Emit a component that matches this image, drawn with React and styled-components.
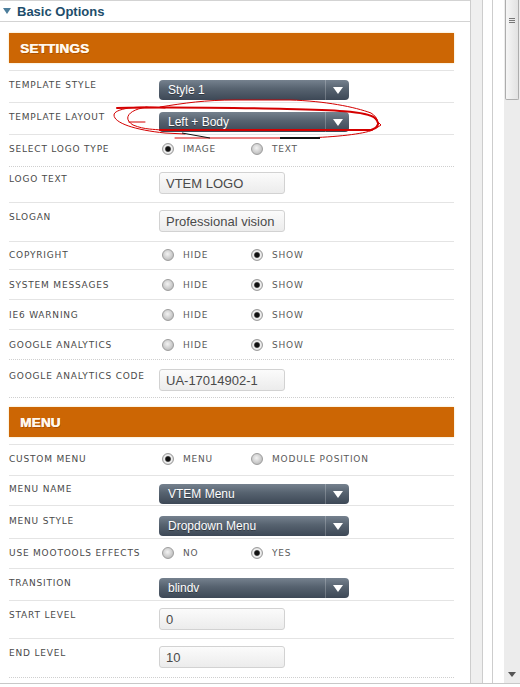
import React from 'react'
import styled, { createGlobalStyle } from 'styled-components'

const GlobalStyle = createGlobalStyle`
  html, body { margin: 0; padding: 0; background: #fff; }
  body { font-family: "Liberation Sans", Arial, sans-serif; }
`

const settings = [
    { label: 'TEMPLATE STYLE', type: 'select', value: 'Style 1', h: 32, pt: 8 },
    { label: 'TEMPLATE LAYOUT', type: 'select', value: 'Left + Body', h: 32, pt: 8 },
    { label: 'SELECT LOGO TYPE', type: 'radio', options: ['IMAGE', 'TEXT'], sel: 0, h: 32, pt: 8, dotted: true },
    { label: 'LOGO TEXT', type: 'input', value: 'VTEM LOGO', h: 36, pt: 6 },
    { label: 'SLOGAN', type: 'input', value: 'Professional vision', h: 39, pt: 8 },
    { label: 'COPYRIGHT', type: 'radio', options: ['HIDE', 'SHOW'], sel: 1, h: 28, pt: 7 },
    { label: 'SYSTEM MESSAGES', type: 'radio', options: ['HIDE', 'SHOW'], sel: 1, h: 30, pt: 9 },
    { label: 'IE6 WARNING', type: 'radio', options: ['HIDE', 'SHOW'], sel: 1, h: 30, pt: 9 },
    { label: 'GOOGLE ANALYTICS', type: 'radio', options: ['HIDE', 'SHOW'], sel: 1, h: 30, pt: 9, dotted: true },
    { label: 'GOOGLE ANALYTICS CODE', type: 'input', value: 'UA-17014902-1', h: 38, pt: 10, dotted: true },
]

const menu = [
    { label: 'CUSTOM MENU', type: 'radio', options: ['MENU', 'MODULE POSITION'], sel: 0, h: 31, pt: 8 },
    { label: 'MENU NAME', type: 'select', value: 'VTEM Menu', h: 30, pt: 7 },
    { label: 'MENU STYLE', type: 'select', value: 'Dropdown Menu', h: 33, pt: 9 },
    { label: 'USE MOOTOOLS EFFECTS', type: 'radio', options: ['NO', 'YES'], sel: 1, h: 30, pt: 8 },
    { label: 'TRANSITION', type: 'select', value: 'blindv', h: 32, pt: 8 },
    { label: 'START LEVEL', type: 'input', value: '0', h: 38, pt: 8 },
    { label: 'END LEVEL', type: 'input', value: '10', h: 39, pt: 8, dotted: true },
]

function Control({ row }) {
    if (row.type === 'select') {
        return (
            <Select>
                <SelectText>{row.value}</SelectText>
                <SelectArrow>
                    <svg width="10" height="7" viewBox="0 0 10 7"><path d="M0 0 H10 L5 7 Z" fill="#fff" /></svg>
                </SelectArrow>
            </Select>
        )
    }
    if (row.type === 'input') {
        return <Input>{row.value}</Input>
    }
    return (
        <Radios>
            {row.options.map((o, i) => (
                <Option key={o}>
                    <Radio checked={i === row.sel} />
                    {o}
                </Option>
            ))}
        </Radios>
    )
}

function Section({ title, rows, top }) {
    return (
        <SectionWrap top={top}>
            <SectionHeader>{title}</SectionHeader>
            <List>
                {rows.map(r => (
                    <Row key={r.label} h={r.h} pt={r.pt} dotted={r.dotted}>
                        <Label>{r.label}</Label>
                        <Control row={r} />
                    </Row>
                ))}
            </List>
        </SectionWrap>
    )
}

export default function App() {
    return (
        <Page>
            <GlobalStyle />
            <Main>
                <Panel>
                    <Header>
                        <svg width="8" height="6" viewBox="0 0 8 6"><path d="M0 0 H8 L4 6 Z" fill="#4c7d9b" /></svg>
                        Basic Options
                    </Header>
                    <Body>
                        <Section title="SETTINGS" rows={settings} top={11} />
                        <Section title="MENU" rows={menu} top={9} />
                    </Body>
                    <Scribble width="285" height="50" viewBox="0 0 285 50">
                        <g fill="none" stroke="#d40000" strokeLinecap="round">
                            <path d="M12 13 C60 12 150 13 182 14 C225 15 262 16 270 23 C275 28 274 32 266 35" strokeWidth="2" />
                            <path d="M55 35 L266 35" strokeWidth="2" />
                            <path d="M60 13 C30 10 9 14 9 20 C9 28 30 35 60 38 L80 39" strokeWidth="1" />
                            <path d="M42 12 C22 15 18 24 28 30 C40 35 50 34 55 35" strokeWidth="1" />
                            <path d="M55 12 C80 8 100 5 130 5 L185 5 C220 6 250 12 266 18 C274 23 275 30 268 35 C258 39 232 42 200 43 L70 43" strokeWidth="1" />
                            <path d="M268 22 L276 30 L270 34" strokeWidth="1" />
                            <path d="M24 27 L40 27" strokeWidth="1" />
                        </g>
                        <path d="M77 38 L105 43" stroke="#111" strokeWidth="1" fill="none" />
                        <path d="M175 43 L215 43" stroke="#111" strokeWidth="2" fill="none" />
                    </Scribble>
                </Panel>
                <Gutter grey />
                <Gutter w={9} />
                <Gutter w={11} last />
                <Scrollbar>
                    <Thumb>
                        <Grip />
                        <Grip />
                        <Grip />
                    </Thumb>
                    <DownArrow>
                        <svg width="8" height="5" viewBox="0 0 8 5"><path d="M0 0 H8 L4 5 Z" fill="#555" /></svg>
                    </DownArrow>
                </Scrollbar>
            </Main>
        </Page>
    )
}

const Page = styled.div`
    width: 520px;
    height: 687px;
    overflow: hidden;
    background: #fff;
`

const Main = styled.div`
    display: flex;
    height: 683px;
    border-bottom: 1px solid #c8c8c8;
`

const Panel = styled.div`
    position: relative;
    width: 470px;
    flex: none;
    border-right: 1px solid #cdcdcd;
`

const Header = styled.div`
    height: 22px;
    box-sizing: border-box;
    border-top: 1px solid #d3d3d3;
    border-bottom: 1px solid #d3d3d3;
    display: flex;
    align-items: center;
    gap: 6px;
    padding-left: 3px;
    font: bold 13px "Liberation Sans", Arial, sans-serif;
    color: #1d4d6b;
`

const Body = styled.div`
    padding: 0 16px 0 9px;
`

const SectionWrap = styled.div`
    margin-top: ${p => p.top}px;
`

const SectionHeader = styled.div`
    height: 30px;
    background: #cc6604;
    box-shadow: 0 0 2px #f6dca8;
    display: flex;
    align-items: center;
    padding-left: 11px;
    color: #fff8ee;
    font: bold 13.5px "Liberation Sans", Arial, sans-serif;
    letter-spacing: 0.2px;
    text-shadow: 0.5px 0 0 #fff8ee, 1px 1px 0 rgba(120, 50, 0, 0.45);
    margin-bottom: 7px;
`

const List = styled.div`
    border-top: 1px solid #e4e4e4;
`

const Row = styled.div`
    display: grid;
    grid-template-columns: 150px 1fr;
    align-items: start;
    box-sizing: border-box;
    height: ${p => p.h}px;
    padding-top: ${p => p.pt}px;
    border-bottom: 1px ${p => (p.dotted ? 'dotted #cfcfcf' : 'solid #e4e4e4')};
`

const Label = styled.div`
    font: 9px "DejaVu Sans", Verdana, sans-serif;
    line-height: 12px;
    letter-spacing: 0.8px;
    color: #4a4a4a;
    white-space: nowrap;
`

const Select = styled.div`
    width: 190px;
    height: 20px;
    margin-top: 1px;
    border-radius: 4px;
    background: linear-gradient(#75818e, #56626f 45%, #3d4856);
    display: flex;
    align-items: center;
    color: #fff;
    font: 12px "Liberation Sans", Arial, sans-serif;
    text-shadow: 0 1px 0 rgba(0, 0, 0, 0.35);
`

const SelectText = styled.span`
    flex: 1;
    padding-left: 9px;
`

const SelectArrow = styled.span`
    width: 23px;
    height: 100%;
    border-left: 1px solid rgba(255, 255, 255, 0.22);
    display: flex;
    align-items: center;
    justify-content: center;
`

const Input = styled.div`
    width: 126px;
    height: 22px;
    margin-top: -1px;
    box-sizing: border-box;
    border: 1px solid #d2d2d2;
    border-radius: 3px;
    background: linear-gradient(#fbfbfb, #ececec);
    padding-left: 6px;
    display: flex;
    align-items: center;
    font: 13px "Liberation Sans", Arial, sans-serif;
    color: #4a4a4a;
`

const Radios = styled.div`
    display: flex;
    padding-left: 3px;
`

const Option = styled.div`
    width: 89px;
    display: flex;
    align-items: center;
    gap: 9px;
    white-space: nowrap;
    font: 9px "DejaVu Sans", Verdana, sans-serif;
    line-height: 12px;
    letter-spacing: 0.8px;
    color: #5a5a5a;
`

const Radio = styled.span`
    width: 12px;
    height: 12px;
    flex: none;
    box-sizing: border-box;
    border-radius: 50%;
    border: 1px solid #9d9d9d;
    background: ${p =>
        p.checked
            ? 'radial-gradient(circle, #111 0 2px, #555 2.6px, #e9e9e9 3.4px, #f2f2f2 4px, #c4c4c4 5.5px)'
            : 'radial-gradient(circle at 45% 40%, #f3f3f3, #c9c9c9 60%, #a8a8a8)'};
`

const Scribble = styled.svg`
    position: absolute;
    left: 105px;
    top: 95px;
    pointer-events: none;
`

const Gutter = styled.div`
    flex: none;
    width: ${p => p.w || 11}px;
    background: ${p => (p.grey ? '#efefef' : '#fff')};
    border-right: ${p => (p.last ? 'none' : '1px solid #cdcdcd')};
`

const Scrollbar = styled.div`
    position: relative;
    width: 16px;
    flex: none;
    background: #ececec;
`

const Thumb = styled.div`
    width: 14px;
    height: 100px;
    margin-left: 1px;
    box-sizing: border-box;
    border: 1px solid #adadad;
    border-top: none;
    border-radius: 0 0 2px 2px;
    background: linear-gradient(to right, #f6f6f6, #e2e2e2);
    display: flex;
    flex-direction: column;
    align-items: center;
    gap: 1px;
    padding-top: 18px;
`

const Grip = styled.span`
    width: 6px;
    height: 1px;
    background: #777;
`

const DownArrow = styled.span`
    position: absolute;
    left: 4px;
    bottom: 6px;
    display: flex;
`
